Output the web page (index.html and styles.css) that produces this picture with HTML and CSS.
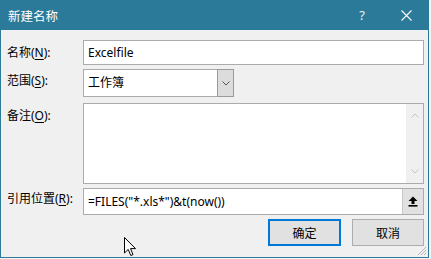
FILE: index.html
```html
<!DOCTYPE html>
<html lang="zh-CN">
<head>
  <meta charset="UTF-8" />
  <title>新建名称</title>
  <link rel="stylesheet" href="styles.css">
</head>
<body>
  <div class="dialog">
    <div class="titlebar">
      <span class="title">新建名称</span>
      <span class="help">?</span>
      <svg class="close" width="11" height="11" viewBox="0 0 11 11">
        <path d="M0.5 0.5 L10.5 10.5 M10.5 0.5 L0.5 10.5" stroke="#fff" stroke-width="1.1" fill="none"/>
      </svg>
    </div>

    <div class="content">
      <div class="row row-name">
        <label class="label">名称(<u>N</u>):</label>
        <div class="field">Excelfile</div>
      </div>

      <div class="row row-scope">
        <label class="label">范围(<u>S</u>):</label>
        <div class="combo">
          <div class="combo-text">工作簿</div>
          <div class="combo-btn">
            <svg width="8" height="5" viewBox="0 0 8 5">
              <path d="M0.5 0.5 L4 4 L7.5 0.5" stroke="#555" stroke-width="1" fill="none"/>
            </svg>
          </div>
        </div>
      </div>

      <div class="row row-note">
        <label class="label">备注(<u>O</u>):</label>
        <div class="field memo">
          <div class="memo-area"></div>
          <div class="scrollbar">
            <svg width="8" height="5" viewBox="0 0 8 5">
              <path d="M0.5 4.5 L4 1 L7.5 4.5" stroke="#c4c4c4" stroke-width="1" fill="none"/>
            </svg>
            <svg width="8" height="5" viewBox="0 0 8 5">
              <path d="M0.5 0.5 L4 4 L7.5 0.5" stroke="#c4c4c4" stroke-width="1" fill="none"/>
            </svg>
          </div>
        </div>
      </div>

      <div class="row row-ref">
        <label class="label">引用位置(<u>R</u>):</label>
        <div class="field ref">
          <span class="ref-text">=FILES("*.xls*")&amp;t(now())</span>
          <div class="collapse-btn">
            <svg width="10" height="11" viewBox="0 0 10 11">
              <path d="M5 0.5 L9.5 5 L6.5 5 L6.5 8 L3.5 8 L3.5 5 L0.5 5 Z" fill="#000"/>
              <rect x="0.5" y="9" width="9" height="1.6" fill="#000"/>
            </svg>
          </div>
        </div>
      </div>

      <div class="actions">
        <button class="btn btn-default">确定</button>
        <button class="btn">取消</button>
      </div>
    </div>

    <svg class="grip" width="10" height="10" viewBox="0 0 10 10">
      <path d="M9 1 L1 9 M9 4 L4 9 M9 7 L7 9" stroke="#b5b5b5" stroke-width="1" fill="none"/>
    </svg>
  </div>

  <!-- mouse pointer left in the shot -->
  <svg class="cursor" width="13" height="20" viewBox="0 0 13 20">
    <path d="M0.5 0.5 L0.5 16 L4.2 12.4 L6.8 18.5 L9 17.6 L6.5 11.6 L11.5 11.6 Z" fill="#fff" stroke="#000" stroke-width="1"/>
  </svg>
</body>
</html>
```

FILE: styles.css
```css
body {
  margin: 0;
  background: #f4f4f4;
  font-family: "Noto Sans", "Noto Sans CJK SC", sans-serif;
  font-size: 12px;
  color: #000;
}
.dialog {
  position: relative;
  width: 429px;
  height: 258px;
  box-sizing: border-box;
  background: #f0f0f0;
  border: 1px solid #2b7a99;
  border-top: 0;
}
.titlebar {
  height: 30px;
  margin: 0 -1px;
  background: #2b7a99;
  color: #fff;
  display: flex;
  align-items: center;
  padding-left: 8px;
}
.title {
  flex: 1;
  font-size: 12.5px;
}
.help {
  font-size: 13px;
  margin-right: 36px;
  color: #e8f0f4;
}
.close {
  margin-right: 17px;
}
.content {
  padding: 0 4px 0 6px;
}
.row {
  display: flex;
  margin-top: 4px;
}
.label {
  width: 76px;
  flex: none;
  white-space: nowrap;
}
.label u {
  text-underline-offset: 2px;
}
.field {
  flex: 1;
  box-sizing: border-box;
  background: #fff;
  border: 1px solid #ababab;
  padding: 0 4px;
}
.row-name {
  margin-top: 10px;
}
.row-name .label,
.row-name .field {
  height: 25px;
  line-height: 23px;
}
.row-name .label {
  line-height: 25px;
}
.row-scope .label {
  line-height: 24px;
}
.combo {
  display: flex;
  width: 151px;
  height: 28px;
}
.combo-text {
  flex: 1;
  background: #fff;
  border: 1px solid #ababab;
  border-right: 0;
  padding: 0 4px;
  line-height: 26px;
}
.combo-btn {
  width: 17px;
  box-sizing: border-box;
  background: #dcdcdc;
  border: 1px solid #9a9a9a;
  display: flex;
  align-items: center;
  justify-content: center;
}
.row-note {
  margin-top: 6px;
}
.row-note .label {
  padding-top: 3px;
  line-height: 20px;
}
.memo {
  height: 81px;
  padding: 0;
  display: flex;
}
.memo-area {
  flex: 1;
}
.scrollbar {
  width: 17px;
  background: #f0f0f0;
  display: flex;
  flex-direction: column;
  justify-content: space-between;
  align-items: center;
  padding: 9px 0 9px;
}
.row-ref .label {
  line-height: 21px;
}
.ref {
  height: 27px;
  display: flex;
  padding-right: 0;
}
.ref-text {
  flex: 1;
  line-height: 25px;
}
.collapse-btn {
  width: 20px;
  background: #e1e1e1;
  border-left: 1px solid #c8c8c8;
  display: flex;
  align-items: center;
  justify-content: center;
}
.actions {
  display: flex;
  justify-content: flex-end;
  gap: 11px;
  margin-top: 4px;
}
.btn {
  width: 72px;
  height: 27px;
  box-sizing: border-box;
  background: #e1e1e1;
  border: 1px solid #adadad;
  font: inherit;
  color: #000;
  padding: 0;
}
.btn-default {
  width: 73px;
  border: 2px solid #0078d7;
}
.grip {
  position: absolute;
  right: 1px;
  bottom: 1px;
}
.cursor {
  position: absolute;
  left: 124px;
  top: 237px;
}
```
